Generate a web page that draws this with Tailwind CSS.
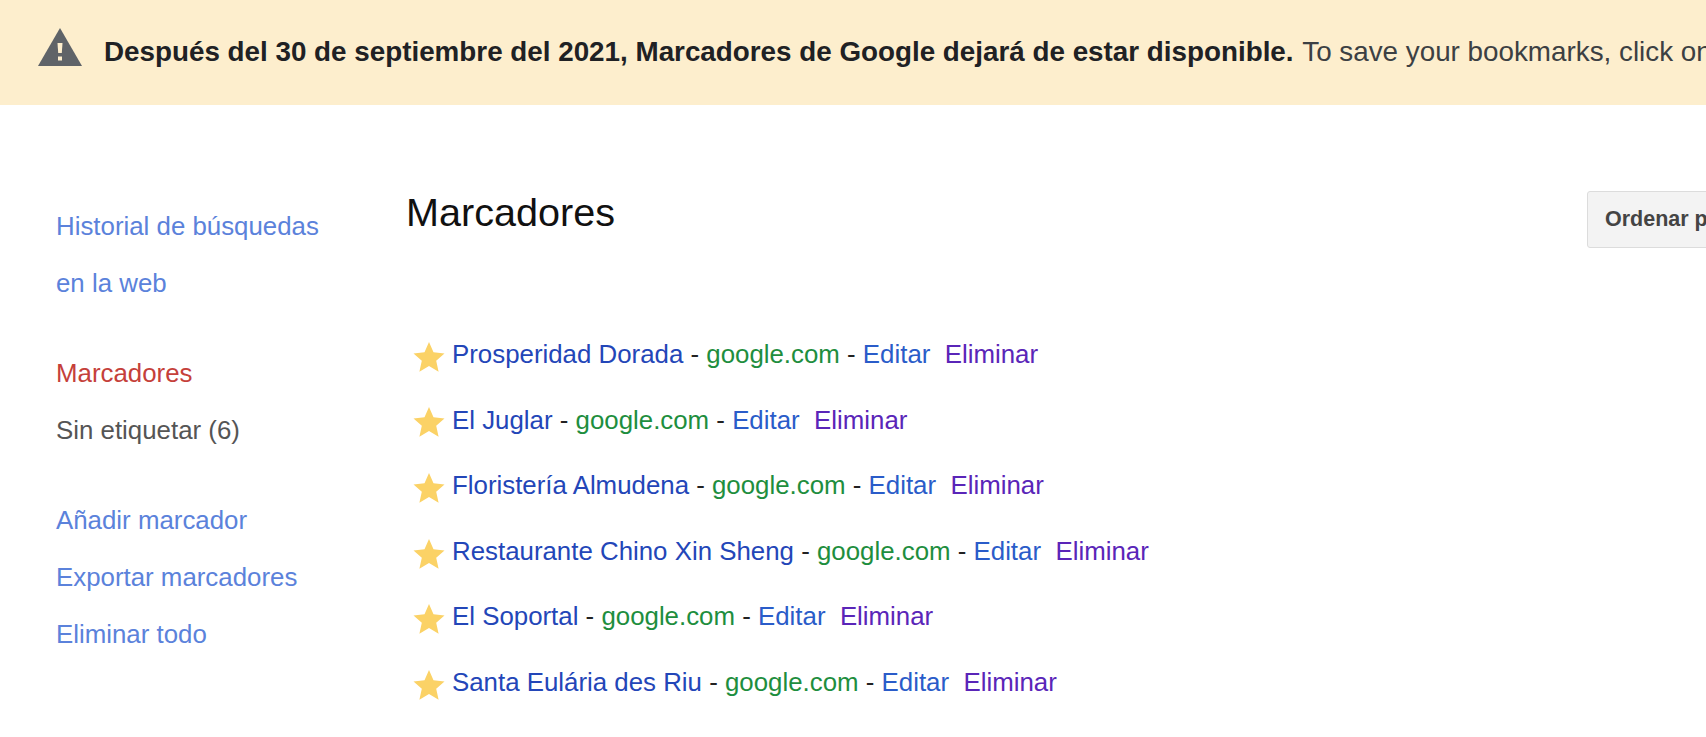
<!DOCTYPE html>
<html lang="es">
<head>
  <meta charset="UTF-8" />
  <title>Marcadores de Google</title>
  <script src="https://cdn.jsdelivr.net/npm/@tailwindcss/browser@4"></script>
</head>
<body class="bg-white h-[737px] w-[1706px] overflow-hidden font-['Liberation_Sans',Arial,sans-serif]">

  <!-- aviso -->
  <div class="h-[105px] bg-[#fdeecd] flex items-center pl-[38px] whitespace-nowrap overflow-hidden">
    <svg class="w-[44px] h-[38px] shrink-0 mb-[11px]" viewBox="0 0 44 38">
      <path d="M22 0 L44 38 L0 38 Z" fill="#5f6368" />
      <path d="M19.5 15 H24.5 L23.8 25 H20.2 Z" fill="#fdeecd" />
      <rect x="20" y="28.5" width="4" height="4" fill="#fdeecd" />
    </svg>
    <p class="ml-[22px] mb-[2px] text-[27.8px] text-[#202124]"><b>Después del 30 de septiembre del 2021, Marcadores de Google dejará de estar disponible.</b> <span class="ml-[1px] text-[#3c4043]">To save your bookmarks, click on the button below.</span></p>
  </div>

  <div class="flex">
    <!-- menu lateral -->
    <nav class="w-[406px] shrink-0 pl-[56px] pt-[93px] text-[25.85px] leading-[57px] text-[#5b82db]">
      <a class="block">Historial de búsquedas</a>
      <a class="block">en la web</a>
      <a class="block mt-[33px] text-[#c5403a]">Marcadores</a>
      <a class="block text-[#555555]">Sin etiquetar (6)</a>
      <a class="block mt-[33px]">Añadir marcador</a>
      <a class="block">Exportar marcadores</a>
      <a class="block">Eliminar todo</a>
    </nav>

    <main class="flex-1 min-w-0">
      <div class="flex justify-between items-start">
        <h1 class="mt-[82px] text-[39.6px] leading-[50px] text-[#111111]">Marcadores</h1>
        <button class="mt-[86px] h-[57px] w-[200px] shrink-0 -mr-[81px] text-left pl-[17px] border border-[#dcdcdc] rounded-[3px] bg-[#f3f3f3] text-[21.5px] font-bold text-[#444444] whitespace-nowrap">Ordenar por fecha</button>
      </div>

      <ul class="mt-[74px] text-[25.85px] leading-[65.6px] text-[#222222]">
        <li class="flex items-center whitespace-pre">
          <svg class="w-[32px] h-[32px] ml-[7px] mr-[7px] mt-[4px] shrink-0" viewBox="0 0 32 32"><path d="M16 1 L20.5 11.3 L31.5 12.4 L23.2 19.8 L25.6 30.8 L16 25.1 L6.4 30.8 L8.8 19.8 L0.5 12.4 L11.5 11.3 Z" fill="#fbd266" /></svg>
          <span><a class="text-[#2346b8]">Prosperidad Dorada</a> - <a class="text-[#1e8e3e]">google.com</a> - <a class="text-[#2a5cc9]">Editar</a>  <a class="text-[#5a25b8]">Eliminar</a></span>
        </li>
        <li class="flex items-center whitespace-pre">
          <svg class="w-[32px] h-[32px] ml-[7px] mr-[7px] mt-[4px] shrink-0" viewBox="0 0 32 32"><path d="M16 1 L20.5 11.3 L31.5 12.4 L23.2 19.8 L25.6 30.8 L16 25.1 L6.4 30.8 L8.8 19.8 L0.5 12.4 L11.5 11.3 Z" fill="#fbd266" /></svg>
          <span><a class="text-[#2346b8]">El Juglar</a> - <a class="text-[#1e8e3e]">google.com</a> - <a class="text-[#2a5cc9]">Editar</a>  <a class="text-[#5a25b8]">Eliminar</a></span>
        </li>
        <li class="flex items-center whitespace-pre">
          <svg class="w-[32px] h-[32px] ml-[7px] mr-[7px] mt-[4px] shrink-0" viewBox="0 0 32 32"><path d="M16 1 L20.5 11.3 L31.5 12.4 L23.2 19.8 L25.6 30.8 L16 25.1 L6.4 30.8 L8.8 19.8 L0.5 12.4 L11.5 11.3 Z" fill="#fbd266" /></svg>
          <span><a class="text-[#2346b8]">Floristería Almudena</a> - <a class="text-[#1e8e3e]">google.com</a> - <a class="text-[#2a5cc9]">Editar</a>  <a class="text-[#5a25b8]">Eliminar</a></span>
        </li>
        <li class="flex items-center whitespace-pre">
          <svg class="w-[32px] h-[32px] ml-[7px] mr-[7px] mt-[4px] shrink-0" viewBox="0 0 32 32"><path d="M16 1 L20.5 11.3 L31.5 12.4 L23.2 19.8 L25.6 30.8 L16 25.1 L6.4 30.8 L8.8 19.8 L0.5 12.4 L11.5 11.3 Z" fill="#fbd266" /></svg>
          <span><a class="text-[#2346b8]">Restaurante Chino Xin Sheng</a> - <a class="text-[#1e8e3e]">google.com</a> - <a class="text-[#2a5cc9]">Editar</a>  <a class="text-[#5a25b8]">Eliminar</a></span>
        </li>
        <li class="flex items-center whitespace-pre">
          <svg class="w-[32px] h-[32px] ml-[7px] mr-[7px] mt-[4px] shrink-0" viewBox="0 0 32 32"><path d="M16 1 L20.5 11.3 L31.5 12.4 L23.2 19.8 L25.6 30.8 L16 25.1 L6.4 30.8 L8.8 19.8 L0.5 12.4 L11.5 11.3 Z" fill="#fbd266" /></svg>
          <span><a class="text-[#2346b8]">El Soportal</a> - <a class="text-[#1e8e3e]">google.com</a> - <a class="text-[#2a5cc9]">Editar</a>  <a class="text-[#5a25b8]">Eliminar</a></span>
        </li>
        <li class="flex items-center whitespace-pre">
          <svg class="w-[32px] h-[32px] ml-[7px] mr-[7px] mt-[4px] shrink-0" viewBox="0 0 32 32"><path d="M16 1 L20.5 11.3 L31.5 12.4 L23.2 19.8 L25.6 30.8 L16 25.1 L6.4 30.8 L8.8 19.8 L0.5 12.4 L11.5 11.3 Z" fill="#fbd266" /></svg>
          <span><a class="text-[#2346b8]">Santa Eulária des Riu</a> - <a class="text-[#1e8e3e]">google.com</a> - <a class="text-[#2a5cc9]">Editar</a>  <a class="text-[#5a25b8]">Eliminar</a></span>
        </li>
      </ul>
    </main>
  </div>
</body>
</html>
